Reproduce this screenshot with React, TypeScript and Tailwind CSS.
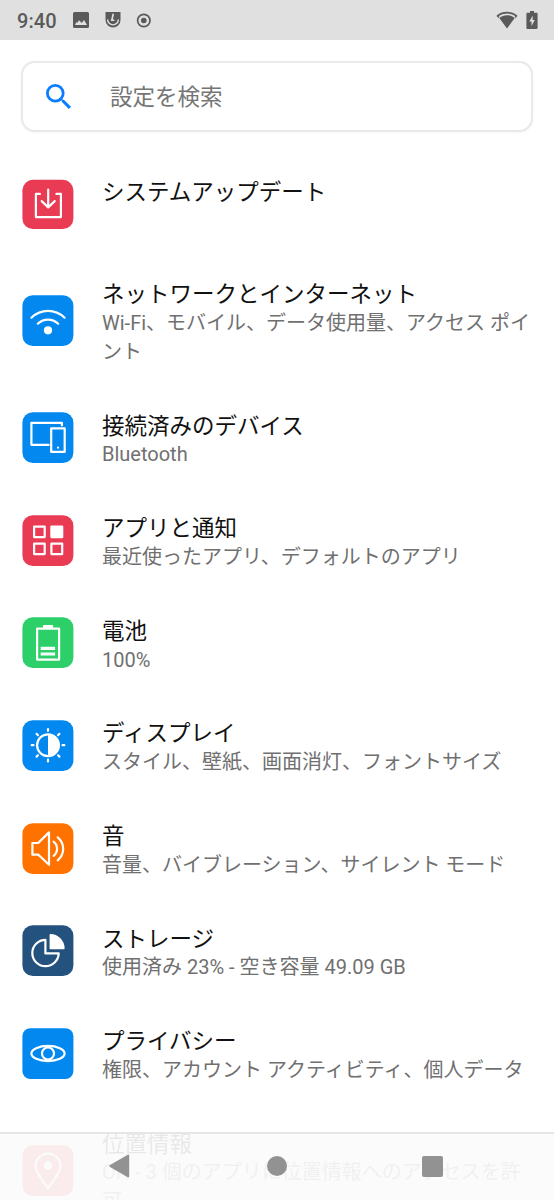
import React from 'react';

type Setting = {
  title: string;
  summary?: string;
  color: string;
  tileHeight?: number;
  radius?: number;
  icon: React.ReactNode;
};

const settings: Setting[] = [
  {
    title: 'システムアップデート',
    color: 'fill-[#e93b54]',
    tileHeight: 49.2,
    icon: (
      <>
        <path d="M17.5 15.9h-4v23.2h25V15.9h-4.5" />
        <path d="M25.8 11.7v17.1M19.3 23.1l6.5 6.3 6.5-6.3" />
      </>
    )
  },
  {
    title: 'ネットワークとインターネット',
    summary: 'Wi-Fi、モバイル、データ使用量、アクセス ポイント',
    color: 'fill-[#0388f0]',
    icon: (
      <>
        <path d="M9 22.7C18.5 13.6 32.7 13.6 42.2 22.7" />
        <path d="M15.4 28.7C21.3 23.2 29.9 23.2 35.8 28.7" />
        <circle cx="25.6" cy="35.3" r="4.1" fill="white" stroke="none" />
      </>
    )
  },
  {
    title: '接続済みのデバイス',
    summary: 'Bluetooth',
    color: 'fill-[#0388f0]',
    icon: (
      <>
        <path d="M39.5 13.3v-2.5H9v22h17.3" />
        <rect x="28.8" y="16.3" width="13.5" height="23.6" />
        <circle cx="35.6" cy="35.7" r="1.1" fill="white" stroke="none" />
      </>
    )
  },
  {
    title: 'アプリと通知',
    summary: '最近使ったアプリ、デフォルトのアプリ',
    color: 'fill-[#e93b54]',
    icon: (
      <>
        <rect x="11.7" y="11.7" width="10.6" height="10.4" />
        <rect x="29" y="11.7" width="10.8" height="10.4" fill="white" />
        <rect x="11.7" y="28.7" width="10.6" height="10.4" />
        <rect x="29" y="28.7" width="10.8" height="10.4" />
      </>
    )
  },
  {
    title: '電池',
    summary: '100%',
    color: 'fill-[#2dcf69]',
    icon: (
      <>
        <rect x="14.7" y="11.6" width="22" height="31" />
        <path d="M21.7 10.6V9h8v1.6z" fill="white" />
        <path d="M18.3 29.7h14.4v3.2H18.3zM18.3 35.4h14.4v3.2H18.3z" fill="white" stroke="none" />
      </>
    )
  },
  {
    title: 'ディスプレイ',
    summary: 'スタイル、壁紙、画面消灯、フォントサイズ',
    color: 'fill-[#0388f0]',
    icon: (
      <>
        <circle cx="25.6" cy="25.2" r="10.9" />
        <path d="M25.6 14.3a10.9 10.9 0 0 1 0 21.8z" fill="white" stroke="none" />
        <path d="M25.6 9v1.8M25.6 39.7v1.8M9.3 25.2h1.8M40.1 25.2h1.8M14.2 13.8l1.3 1.3M35.7 35.3l1.3 1.3M14.2 36.6l1.3-1.3M35.7 15.1l1.3-1.3" />
      </>
    )
  },
  {
    title: '音',
    summary: '音量、バイブレーション、サイレント モード',
    color: 'fill-[#ff7200]',
    icon: (
      <>
        <path d="M10 20h5.8L26.6 9.4v32.3L16 31.7h-6z" />
        <path d="M31.2 18.7c4.6 3.6 4.6 10.6 0 14.2M35.3 14.3c7.3 6.2 7.3 16.8 0 23" />
      </>
    )
  },
  {
    title: 'ストレージ',
    summary: '使用済み 23% - 空き容量 49.09 GB',
    color: 'fill-[#24527f]',
    icon: (
      <>
        <path d="M23 14.8A13.2 13.2 0 1 0 36.3 28.4H23z" />
        <path d="M27.9 9.7A13.8 13.8 0 0 1 41.5 23.5H27.9z" fill="white" strokeWidth="1.4" />
      </>
    )
  },
  {
    title: 'プライバシー',
    summary: '権限、アカウント アクティビティ、個人データ',
    color: 'fill-[#0388f0]',
    radius: 8,
    icon: (
      <>
        <ellipse cx="25.6" cy="25.5" rx="16.6" ry="7.6" />
        <circle cx="25.6" cy="25.5" r="6" />
      </>
    )
  },
  {
    title: '位置情報',
    summary: 'ON - 3 個のアプリに位置情報へのアクセスを許可',
    color: 'fill-[#e93b54]',
    icon: (
      <>
        <path d="M25.6 43.3C20 35.5 13.2 28 13.2 20.8a12.4 12.2 0 0 1 24.8 0C38 28 31.2 35.5 25.6 43.3z" />
        <circle cx="25.6" cy="20.6" r="4.3" fill="white" stroke="none" />
      </>
    )
  }
];

const StatusBar = () => (
  <header className="flex h-10 shrink-0 items-center bg-[#e0e0e0] pl-[17px] pr-4 text-[#5a5a5a]">
    <span className="w-[56px] pt-px text-[20px] font-[470] leading-none tracking-[0.1px]">9:40</span>
    <svg width="16" height="16" viewBox="0 0 16 16" fill="currentColor">
      <path fillRule="evenodd" d="M1.5 0h13A1.5 1.5 0 0 1 16 1.5v13a1.5 1.5 0 0 1-1.5 1.5h-13A1.5 1.5 0 0 1 0 14.5v-13A1.5 1.5 0 0 1 1.5 0zM2 13h12l-3-5-2.2 3L6 8.3 4.3 11l-.8-1z" />
    </svg>
    <svg className="ml-4" width="16" height="16" viewBox="0 0 16 16" fill="currentColor">
      <path d="M.5 0h15v8a7.5 7.5 0 0 1-15 0z" />
      <path d="M2.6 7.5a5.4 5.4 0 0 0 10.8 0" fill="none" stroke="#e0e0e0" strokeWidth="1.4" />
      <path d="M8.3 1.8 6.8 8.3h2.6" fill="none" stroke="#e0e0e0" strokeWidth="1.6" />
    </svg>
    <svg className="ml-[15px]" width="15" height="15" viewBox="0 0 15 15">
      <circle cx="7.8" cy="7.5" r="6.2" fill="none" stroke="currentColor" strokeWidth="1.7" />
      <circle cx="7.8" cy="7.5" r="2.8" fill="currentColor" />
    </svg>
    <svg className="ml-auto" width="22" height="18" viewBox="0 0 22 18" fill="currentColor">
      <path d="M1.3 4.9c5.8-4.4 13.6-4.4 19.4 0" fill="none" stroke="currentColor" strokeWidth="1.8" />
      <path d="M3 6.5 1 4.6M19 6.5l2-1.9" stroke="currentColor" strokeWidth="1.4" />
      <path d="M3.3 6.9C7.6 3.2 14.4 3.2 18.7 6.9L11 17.6z" />
    </svg>
    <svg className="ml-2" width="12" height="18" viewBox="0 0 12 18" fill="currentColor">
      <path d="M4 0h4v1.8h2.6c.6 0 1 .4 1 1v14c0 .7-.4 1.1-1 1.1H1.4c-.6 0-1-.4-1-1v-14c0-.7.4-1.1 1-1.1H4z" />
      <path d="M6.7 4.8 3.3 10.6h2.2v4.3l3.3-5.8H6.7z" fill="#e0e0e0" />
    </svg>
  </header>
);

const SearchBar = () => (
  <div className="mx-[23px] mt-[23px] flex h-[67px] shrink-0 items-center rounded-xl bg-white pl-[23px] shadow-[0_0_1px_1.3px_#e9e9e9,0_1px_3px_1px_#f0f0f0]">
    <svg width="25" height="25" viewBox="3 3 17.5 17.5" fill="#0a7cff">
      <path d="M15.5 14h-.79l-.28-.27A6.471 6.471 0 0 0 16 9.5 6.5 6.5 0 1 0 9.5 16c1.61 0 3.09-.59 4.23-1.57l.27.28v.79l5 4.99L20.49 19l-4.99-5zm-6 0C7.01 14 5 11.99 5 9.5S7.01 5 9.5 5 14 7.01 14 9.5 11.99 14 9.5 14z" />
    </svg>
    <span className="ml-[39px] pt-[2px] text-[22.5px] text-[#757575]">設定を検索</span>
  </div>
);

const SettingRow = ({ title, summary, color, tileHeight = 50.8, radius = 10.5, icon }: Setting) => (
  <li className="flex items-center py-5 pl-[22px] pr-[23px]">
    <svg
      className="shrink-0"
      width="52"
      height="51"
      viewBox="-0.4 0 52 51"
      fill="none"
      stroke="white"
      strokeWidth="2.2"
      strokeLinecap="round"
      strokeLinejoin="round"
    >
      <rect
        className={color}
        y={51 - tileHeight}
        width="51"
        height={tileHeight}
        rx={radius}
        stroke="none"
      />
      {icon}
    </svg>
    <div className="ml-7 flex-1 pt-[5.2px]">
      <h2 className="text-[22.5px] leading-[28.8px] text-[#111]">{title}</h2>
      <p className="min-h-[28.6px] text-[20px] leading-[28.6px] text-[#707070]">{summary}</p>
    </div>
  </li>
);

const NavBar = () => (
  <nav className="absolute inset-x-0 bottom-0 flex h-[68px] items-center justify-between border-t-2 border-[#e6e6e6] bg-[#fbfbfb]/92 pb-[2px] pl-[109px] pr-[111px]">
    <svg width="21" height="24" viewBox="0 0 21 24" fill="#929292">
      <path d="M18.8.8 1 11c-.8.5-.8 1.4 0 1.9l17.8 10.3c.8.4 1.4 0 1.4-.8V1.6c0-.8-.6-1.2-1.4-.8z" />
    </svg>
    <div className="mr-[-2px] h-5 w-5 rounded-full bg-[#929292]" />
    <div className="h-[21px] w-[21px] rounded-[2px] bg-[#929292]" />
  </nav>
);

const App = () => {
  return (
    <div className="relative flex h-[1200px] w-full flex-col overflow-hidden bg-white font-['Roboto','Noto_Sans_CJK_JP',sans-serif] font-[390]" lang="ja">
      <StatusBar />
      <SearchBar />
      <ul className="mt-[22.7px]">
        {settings.map((setting) => (
          <SettingRow key={setting.title} {...setting} />
        ))}
      </ul>
      <NavBar />
    </div>
  );
};

export default App;
